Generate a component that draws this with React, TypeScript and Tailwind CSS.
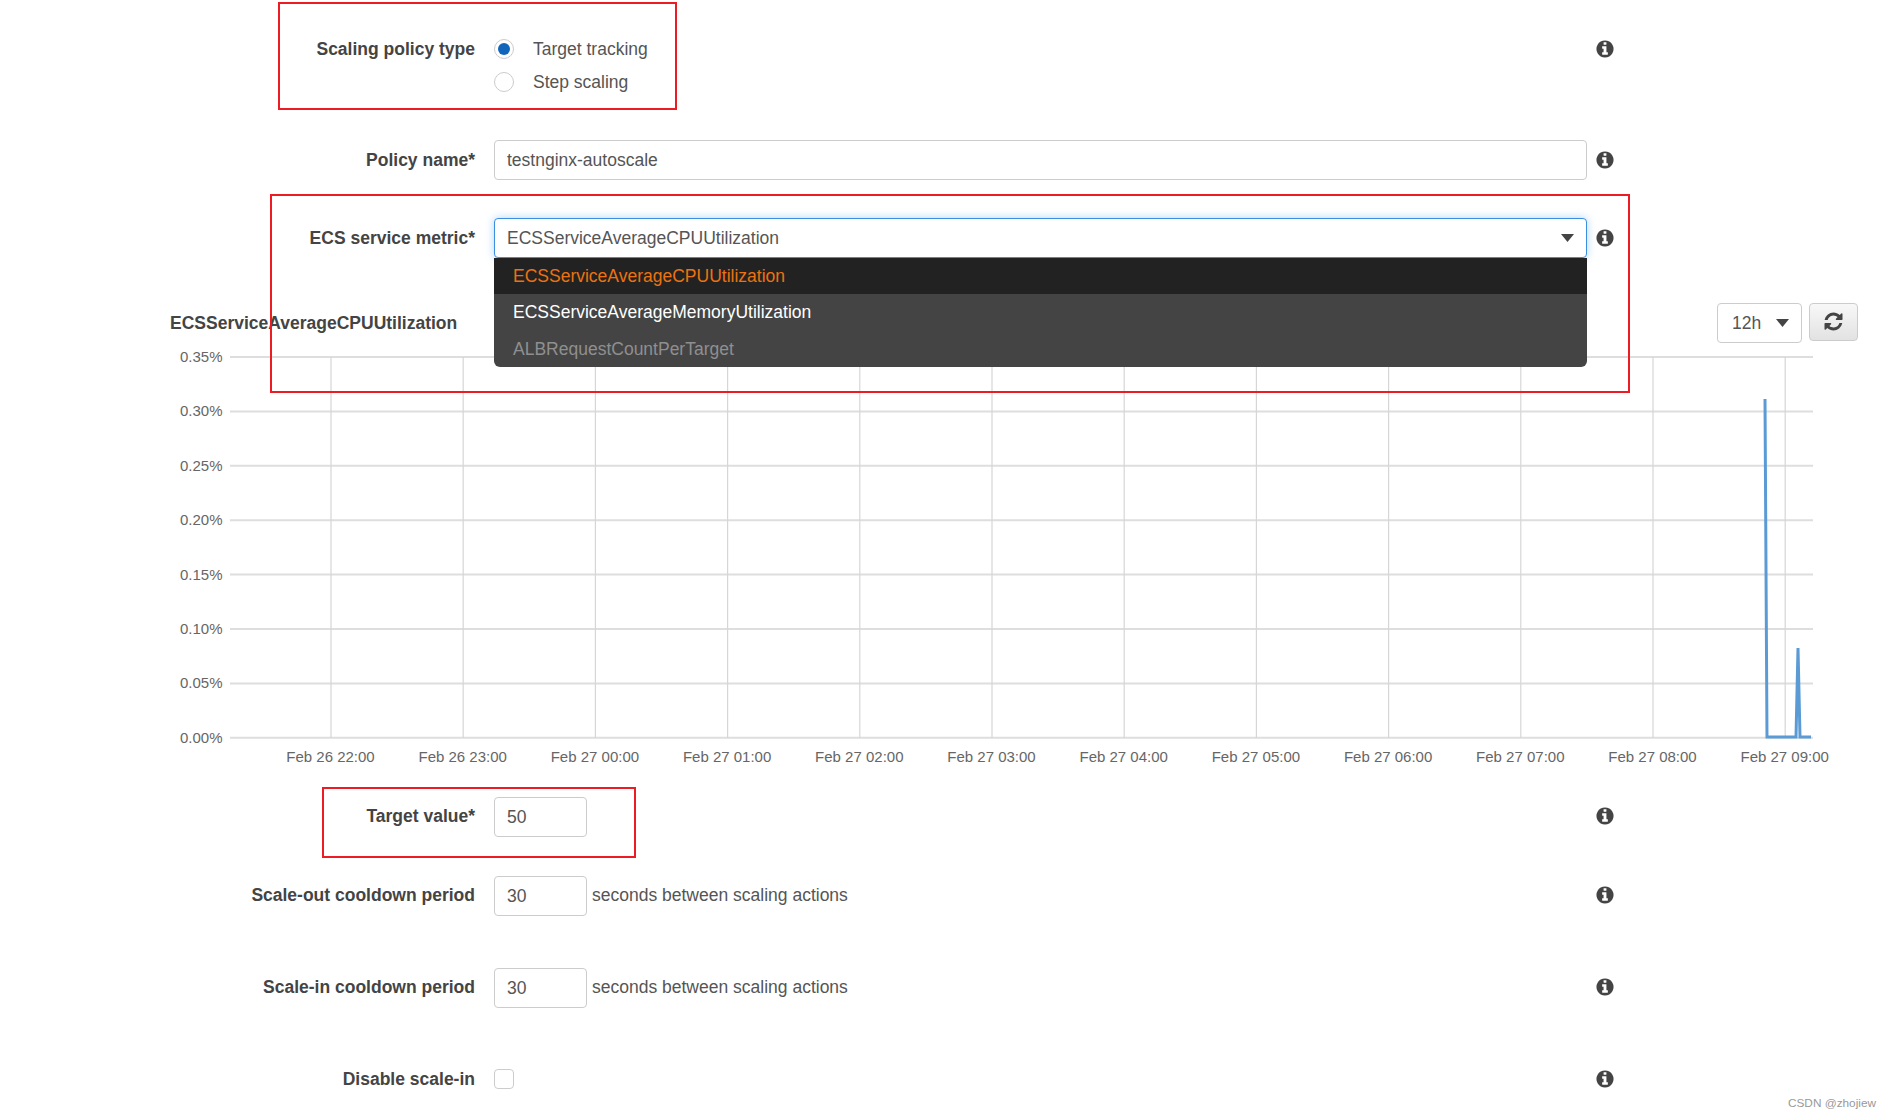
import React from 'react';

const yLabels = ['0.35%', '0.30%', '0.25%', '0.20%', '0.15%', '0.10%', '0.05%', '0.00%'];
const xLabels = [
  'Feb 26 22:00', 'Feb 26 23:00', 'Feb 27 00:00', 'Feb 27 01:00', 'Feb 27 02:00', 'Feb 27 03:00',
  'Feb 27 04:00', 'Feb 27 05:00', 'Feb 27 06:00', 'Feb 27 07:00', 'Feb 27 08:00', 'Feb 27 09:00',
];

const Caret = () => (
  <svg width="13" height="8" viewBox="0 0 13 8" className="shrink-0">
    <path d="M0 0h13L6.5 8z" fill="#444" />
  </svg>
);

const Info = () => (
  <svg width="20" height="20" viewBox="0 0 1792 1792" className="shrink-0 -ml-px">
    <path
      fill="#444"
      d="M1152 1376v-160q0-14-9-23t-23-9h-96v-512q0-14-9-23t-23-9h-320q-14 0-23 9t-9 23v160q0 14 9 23t23 9h96v320h-96q-14 0-23 9t-9 23v160q0 14 9 23t23 9h448q14 0 23-9t9-23zm-128-896v-160q0-14-9-23t-23-9h-192q-14 0-23 9t-9 23v160q0 14 9 23t23 9h192q14 0 23-9t9-23zm640 416q0 209-103 385.500t-279.500 279.500-385.500 103-385.500-103-279.500-279.500-103-385.500 103-385.500 279.500-279.500 385.500-103 385.500 103 279.500 279.500 103 385.500z"
    />
  </svg>
);

const Refresh = () => (
  <svg width="21" height="21" viewBox="0 0 1792 1792" className="-mt-0.5">
    <path
      fill="#444"
      d="M1639 1056q0 5-1 7-64 268-268 434.500t-478 166.500q-146 0-282.500-55t-243.500-157l-129 129q-19 19-45 19t-45-19-19-45v-448q0-26 19-45t45-19h448q26 0 45 19t19 45-19 45l-137 137q71 66 161 102t187 36q134 0 250-65t186-179q11-17 53-117 8-23 30-23h192q13 0 22.500 9.500t9.500 22.500zm25-800v448q0 26-19 45t-45 19h-448q-26 0-45-19t-19-45 19-45l138-138q-148-137-349-137-134 0-250 65t-186 179q-11 17-53 117-8 23-30 23h-199q-13 0-22.500-9.500t-9.500-22.500v-7q65-268 270-434.500t480-166.500q146 0 284 55.500t245 156.500l130-129q19-19 45-19t45 19 19 45z"
    />
  </svg>
);

const Label = ({ children }: { children: React.ReactNode }) => (
  <div className="w-[475px] shrink-0 text-right font-bold text-[#444]">{children}</div>
);

const Row = ({
  className,
  label,
  nudge,
  children,
}: {
  className?: string;
  label: string;
  nudge?: boolean;
  children: React.ReactNode;
}) => (
  <div className={`flex items-center ${className ?? ''}`}>
    <div className={nudge ? 'pb-0.5' : ''}><Label>{label}</Label></div>
    <div className="ml-[19px] w-[1093px] flex items-center">{children}</div>
    <div className={`ml-[9px] ${nudge ? 'pb-0.5' : ''}`}><Info /></div>
  </div>
);

const SmallInput = ({ value }: { value: string }) => (
  <div className="w-[93px] h-10 border border-[#ccc] rounded bg-white px-3 flex items-center">{value}</div>
);

const Chart = () => (
  <svg width="1892" height="437" viewBox="0 0 1892 437" className="block" fontFamily="'Liberation Sans', Arial, sans-serif">
    {yLabels.map((l, i) => {
      const y = 14 + i * 54.4;
      return (
        <g key={l}>
          <line x1="230" x2="1813" y1={y} y2={y} stroke="#dedede" strokeWidth="2" />
          <text x="222.500" y={y + 5} textAnchor="end" fontSize="15" fill="#666">{l}</text>
        </g>
      );
    })}
    {xLabels.map((l, i) => {
      const x = 331 + i * 132.2;
      return (
        <g key={l}>
          <line x1={x} x2={x} y1="14" y2="395" stroke="#d6d6d6" strokeWidth="1.2" />
          <text x={x - 0.5} y="418.500" textAnchor="middle" fontSize="15" fill="#666">{l}</text>
        </g>
      );
    })}
    <polyline
      points="1765,56 1767,394 1796,394 1798,305 1800,394 1811,394"
      fill="none"
      stroke="#5b9bd5"
      strokeWidth="3"
    />
  </svg>
);

export default function App() {
  return (
    <div className="relative w-[1892px] h-[1119px] overflow-hidden bg-white text-[17.5px] font-['Liberation_Sans',Arial,sans-serif] text-[#555]">
      {/* Scaling policy type */}
      <div className="flex items-start pt-[33px]">
        <div className="h-[33px] flex items-center"><Label>Scaling policy type</Label></div>
        <div className="ml-[19px] w-[1093px]">
          <div className="h-[33px] flex items-center gap-[19px]">
            <div className="w-5 h-5 -mt-0.5 rounded-full border border-[#ccc] flex items-center justify-center">
              <div className="w-3 h-3 rounded-full bg-[#1166bb]" />
            </div>
            <span>Target tracking</span>
          </div>
          <div className="h-[33px] flex items-center gap-[19px]">
            <div className="w-5 h-5 -mt-0.5 rounded-full border border-[#ccc]" />
            <span>Step scaling</span>
          </div>
        </div>
        <div className="ml-[9px] h-[33px] flex items-center pb-0.5"><Info /></div>
      </div>

      <Row className="mt-[41px]" label="Policy name*">
        <div className="w-full h-10 border border-[#ccc] rounded bg-white px-3 flex items-center">testnginx-autoscale</div>
      </Row>

      <Row className="mt-[38px]" label="ECS service metric*">
        <div className="relative w-full">
          <div className="h-10 border border-[#3b8fe0] rounded bg-white pl-3 pr-[12px] flex items-center justify-between shadow-[0_0_8px_rgba(80,160,240,0.45)]">
            <span>ECSServiceAverageCPUUtilization</span>
            <Caret />
          </div>
          <div className="absolute z-10 top-10 left-0 w-full rounded-b-md overflow-hidden bg-[#444]">
            <div className="h-9 pl-[19px] flex items-center bg-[#222] text-[#ec7211]">ECSServiceAverageCPUUtilization</div>
            <div className="h-9 pl-[19px] flex items-center text-white">ECSServiceAverageMemoryUtilization</div>
            <div className="h-[37px] pl-[19px] pt-0.5 flex items-center text-[#8f8f8f]">ALBRequestCountPerTarget</div>
          </div>
        </div>
      </Row>

      {/* Chart */}
      <div className="mt-[45px] h-10 flex items-start">
        <div className="ml-[170px] mt-[7px] font-bold text-[#444]">ECSServiceAverageCPUUtilization</div>
        <div className="ml-auto mr-[34px] flex items-start gap-[7px]">
          <div className="w-[85px] h-10 border border-[#ccc] rounded bg-white pl-[14px] pr-[12px] flex items-center justify-between">
            <span>12h</span>
            <Caret />
          </div>
          <div className="w-[49px] h-[38px] border border-[#ccc] rounded bg-gradient-to-b from-[#f8f8f8] to-[#e2e2e2] flex items-center justify-center">
            <Refresh />
          </div>
        </div>
      </div>
      <Chart />

      <Row nudge className="mt-[17px]" label="Target value*">
        <SmallInput value="50" />
      </Row>
      <Row nudge className="mt-[39px]" label="Scale-out cooldown period">
        <SmallInput value="30" />
        <span className="ml-[5px] -mt-0.5">seconds between scaling actions</span>
      </Row>
      <Row nudge className="mt-[52px]" label="Scale-in cooldown period">
        <SmallInput value="30" />
        <span className="ml-[5px] -mt-0.5">seconds between scaling actions</span>
      </Row>
      <Row className="mt-[58px]" label="Disable scale-in">
        <div className="w-5 h-5 border border-[#ccc] rounded bg-white" />
      </Row>

      {/* Red annotation boxes */}
      <div className="absolute z-20 left-[278px] top-[2px] w-[399px] h-[108px] border-2 border-[#ed1c24]" />
      <div className="absolute z-20 left-[270px] top-[194px] w-[1360px] h-[199px] border-2 border-[#ed1c24]" />
      <div className="absolute z-20 left-[322px] top-[787px] w-[314px] h-[71px] border-2 border-[#ed1c24]" />

      <div className="absolute right-[16px] top-[1095px] text-[11.8px] text-[#999]">CSDN @zhojiew</div>
    </div>
  );
}
